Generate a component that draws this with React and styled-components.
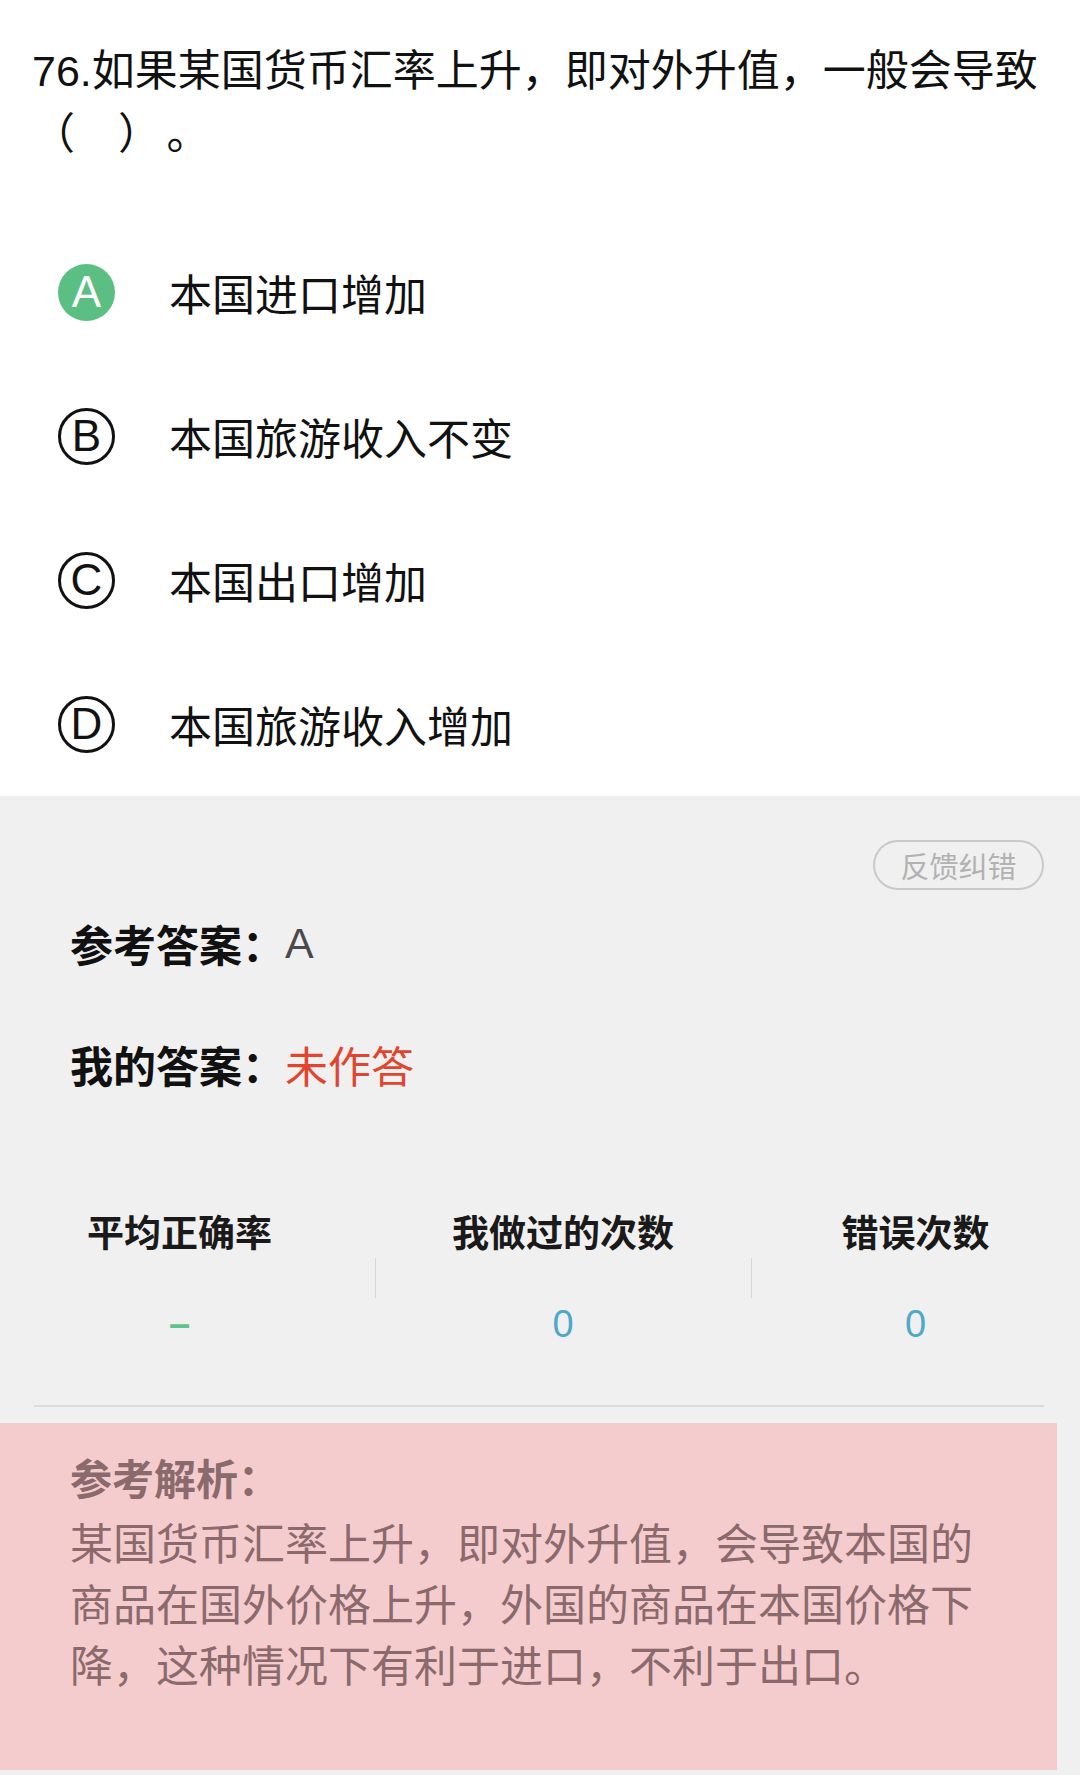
import React from 'react';
import styled, { createGlobalStyle } from 'styled-components';

const GlobalStyle = createGlobalStyle`
  body {
    margin: 0;
    background: #f0f0f0;
    font-family: "Liberation Sans", "Noto Sans CJK SC", sans-serif;
  }
`;

const Question = styled.section`
  background: #fff;
  padding-top: 40px;
`;

const Title = styled.h1`
  margin: 0;
  padding: 0 32px;
  color: #111;
  font-size: 43px;
  font-weight: 400;
  line-height: 63px;
`;

const Stop = styled.span`
  margin-left: 27px;
`;

const Options = styled.ul`
  list-style: none;
  margin: 54px 0 0;
  padding: 0;
`;

const Option = styled.li`
  align-items: center;
  color: #111;
  display: flex;
  font-size: 43px;
  gap: 54px;
  height: 144px;
  padding-left: 58px;
`;

const Badge = styled.span`
  align-items: center;
  background: ${({ $correct }) => ($correct ? '#5bbf83' : 'transparent')};
  border: ${({ $correct }) => ($correct ? 'none' : '3px solid #111')};
  border-radius: 50%;
  box-sizing: border-box;
  color: ${({ $correct }) => ($correct ? '#fff' : '#111')};
  display: flex;
  flex-shrink: 0;
  font-family: "Liberation Sans", sans-serif;
  font-size: 44px;
  height: 57px;
  justify-content: center;
  line-height: 1;
  width: 57px;
`;

const Panel = styled.section`
  padding-top: 44px;
`;

const FeedbackRow = styled.div`
  display: flex;
  justify-content: flex-end;
  padding-right: 36px;
`;

const FeedbackButton = styled.button`
  background: transparent;
  border: 2px solid #c9c9c9;
  border-radius: 25px;
  color: #b2b2b2;
  font-family: "Noto Sans CJK SC", sans-serif;
  font-size: 29px;
  height: 50px;
  padding: 0;
  width: 171px;
`;

const Answers = styled.div`
  display: flex;
  flex-direction: column;
  gap: 61px;
  margin-top: 23px;
  padding-left: 70px;
`;

const AnswerRow = styled.div`
  align-items: center;
  display: flex;
  font-size: 43px;
  height: 60px;
`;

const AnswerLabel = styled.span`
  color: #111;
  font-weight: 700;
`;

const AnswerValue = styled.span`
  color: ${({ $color }) => $color};
  font-size: ${({ $size }) => $size}px;
`;

const Stats = styled.div`
  display: grid;
  grid-template-columns: 375px 376px 1fr;
  margin-top: 118px;
`;

const Stat = styled.div`
  align-items: center;
  display: flex;
  flex-direction: column;
  padding-right: ${({ $shift }) => $shift}px;
`;

const StatLabel = styled.span`
  color: #1a1a1a;
  font-size: 37px;
  font-weight: 700;
  line-height: 46px;
`;

const Rule = styled.span`
  align-self: flex-start;
  border-left: ${({ $visible }) => ($visible ? '1px solid #d6d6d6' : 'none')};
  height: 40px;
`;

const StatValue = styled.span`
  color: ${({ $color }) => $color};
  font-size: 38px;
  font-weight: ${({ $bold }) => ($bold ? 700 : 400)};
  line-height: 52px;
`;

const Divider = styled.hr`
  background: #dcdcdc;
  border: 0;
  height: 2px;
  margin: 55px 36px 0 34px;
`;

const Analysis = styled.section`
  background: #f5cccd;
  box-sizing: border-box;
  color: #8a6a6c;
  margin-top: 16px;
  padding: 27px 0 72px 70px;
  width: 1057px;
`;

const AnalysisTitle = styled.div`
  font-size: 42px;
  font-weight: 700;
  line-height: 61px;
`;

const AnalysisText = styled.p`
  font-size: 43px;
  line-height: 61px;
  margin: 4px 0 0;
  width: 920px;
`;

const options = [
  { key: 'A', text: '本国进口增加', correct: true },
  { key: 'B', text: '本国旅游收入不变' },
  { key: 'C', text: '本国出口增加' },
  { key: 'D', text: '本国旅游收入增加' },
];

const stats = [
  { label: '平均正确率', value: '–', color: '#5ec48a', shift: 16, bold: true },
  { label: '我做过的次数', value: '0', color: '#4da9c9', shift: 0 },
  { label: '错误次数', value: '0', color: '#4da9c9', shift: 0 },
];

const App = () => (
  <>
    <GlobalStyle />
    <Question>
      <Title>
        76.如果某国货币汇率上升，即对外升值，一般会导致（　）<Stop>。</Stop>
      </Title>
      <Options>
        {options.map(({ key, text, correct }) => (
          <Option key={key}>
            <Badge $correct={correct}>{key}</Badge>
            <span>{text}</span>
          </Option>
        ))}
      </Options>
    </Question>
    <Panel>
      <FeedbackRow>
        <FeedbackButton type="button">反馈纠错</FeedbackButton>
      </FeedbackRow>
      <Answers>
        <AnswerRow>
          <AnswerLabel>参考答案：</AnswerLabel>
          <AnswerValue $color="#4a4a4a" $size={43}>A</AnswerValue>
        </AnswerRow>
        <AnswerRow>
          <AnswerLabel>我的答案：</AnswerLabel>
          <AnswerValue $color="#e0452f" $size={43}>未作答</AnswerValue>
        </AnswerRow>
      </Answers>
      <Stats>
        {stats.map(({ label, value, color, shift, bold }, i) => (
          <Stat key={label} $shift={shift}>
            <StatLabel>{label}</StatLabel>
            <Rule $visible={i > 0} />
            <StatValue $color={color} $bold={bold}>{value}</StatValue>
          </Stat>
        ))}
      </Stats>
      <Divider />
      <Analysis>
        <AnalysisTitle>参考解析：</AnalysisTitle>
        <AnalysisText>
          某国货币汇率上升，即对外升值，会导致本国的商品在国外价格上升，外国的商品在本国价格下降，这种情况下有利于进口，不利于出口。
        </AnalysisText>
      </Analysis>
    </Panel>
  </>
);

export default App;
